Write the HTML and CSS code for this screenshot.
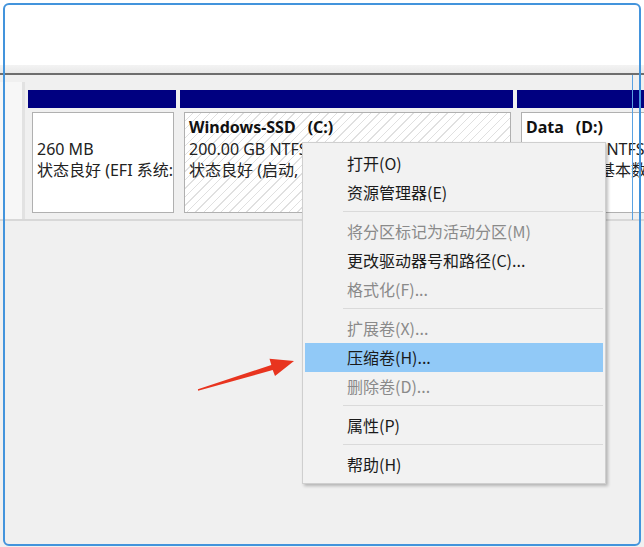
FILE: index.html
```html
<!DOCTYPE html>
<html>
<head>
    <link rel="stylesheet" href="styles.css">
</head>
<body>
    <div class="screen">
        <div class="top-pane"></div>
        <div class="pane-split"></div>
        <div class="pane-rule"></div>

        <div class="disk-row">
            <div class="disk-label"></div>
            <div class="parts">
                <div class="part efi">
                    <div class="part-bar"></div>
                    <div class="part-body">
                        <div>&nbsp;</div>
                        <div>260 MB</div>
                        <div>状态良好 (EFI 系统:</div>
                    </div>
                </div>
                <div class="part sys">
                    <div class="part-bar"></div>
                    <div class="part-body hatched">
                        <div class="name">Windows-SSD<span class="gap"></span>(C:)</div>
                        <div>200.00 GB NTFS</div>
                        <div>状态良好 (启动,</div>
                    </div>
                </div>
                <div class="part data">
                    <div class="part-bar"></div>
                    <div class="part-body">
                        <div class="name">Data<span class="gap"></span>(D:)</div>
                        <div>275.90 GB NTFS</div>
                        <div>状态良好 (基本数</div>
                    </div>
                </div>
            </div>
        </div>

        <!-- context menu over the C: partition -->
        <div class="menu">
            <div class="menu-item">打开(O)</div>
            <div class="menu-item">资源管理器(E)</div>
            <div class="menu-sep"></div>
            <div class="menu-item disabled">将分区标记为活动分区(M)</div>
            <div class="menu-item">更改驱动器号和路径(C)...</div>
            <div class="menu-item disabled">格式化(F)...</div>
            <div class="menu-sep"></div>
            <div class="menu-item disabled">扩展卷(X)...</div>
            <div class="menu-item active">压缩卷(H)...</div>
            <div class="menu-item disabled">删除卷(D)...</div>
            <div class="menu-sep"></div>
            <div class="menu-item">属性(P)</div>
            <div class="menu-sep"></div>
            <div class="menu-item">帮助(H)</div>
        </div>

        <svg class="arrow" width="644" height="547" viewBox="0 0 644 547">
            <polygon fill="#e8341f" points="197.9,389.3 271.3,365 269.5,358.8 294,361 275,376 272.7,370 198.1,390.7" />
        </svg>

        <div class="select-edge"></div>
        <div class="frame"></div>
    </div>
</body>
</html>
```

FILE: styles.css
```css
body {
    margin: 0;
    background: #f0f0f0;
    font-family: "Noto Sans", "Noto Sans CJK SC", sans-serif;
    color: #1a1a1a;
}
.screen {
    position: relative;
    width: 644px;
    height: 547px;
    overflow: hidden;
    background: #f0f0f0;
}
.top-pane {
    height: 65px;
    background: #ffffff;
}
.pane-split {
    height: 8px;
    background: linear-gradient(#f3f3f3, #e9e9e9);
}
.pane-rule {
    height: 2px;
    background: #6e6e6e;
}

.disk-row {
    display: flex;
    margin-top: 7px;
    height: 137px;
    border-bottom: 2px solid #d8d8d8;
}
.disk-label {
    width: 22px;
    flex-shrink: 0;
    background: #f7f7f7;
    border-right: 3px solid #e2e2e2;
}
.parts {
    display: flex;
    gap: 4px;
    padding: 8px 0 0 3px;
    flex: 1;
    min-width: 0;
}
.part {
    flex-shrink: 0;
    overflow: hidden;
}
.efi {
    width: 148px;
}
.sys {
    width: 333px;
}
.data {
    width: 140px;
}
.part-bar {
    height: 18px;
    background: #000080;
}
.part-body {
    height: 95px;
    margin: 4px 2px 0 4px;
    padding: 4px 0 0 4px;
    border: 1px solid #b0b0b0;
    background: #ffffff;
    font-size: 16px;
    line-height: 21.5px;
    white-space: nowrap;
    overflow: hidden;
    color: #222;
}
.part-body .name {
    font-weight: bold;
    color: #111;
}
.part-body .gap {
    display: inline-block;
    width: 12px;
}
.hatched {
    background: repeating-linear-gradient(135deg, #ffffff 0 5px, #e0e0e0 5px 6px);
}

.menu {
    position: absolute;
    left: 302px;
    top: 142px;
    width: 302px;
    padding: 6px 0 4px;
    background: #f2f2f2;
    border: 1px solid #cfcfcf;
    box-shadow: 2px 2px 3px rgba(0, 0, 0, 0.25);
    font-family: "Noto Sans CJK SC", sans-serif;
    font-size: 16px;
}
.menu-item {
    height: 29px;
    line-height: 29px;
    margin: 0 2px;
    padding-left: 42px;
    color: #1a1a1a;
}
.menu-item.disabled {
    color: #8a8a8a;
}
.menu-item.active {
    background: #91c9f7;
}
.menu-sep {
    height: 1px;
    margin: 4px 2px 5px 40px;
    background: #dadada;
}

.arrow {
    position: absolute;
    left: 0;
    top: 0;
}
/* leftover selection outline from the capture */
.select-edge {
    position: absolute;
    left: 632px;
    top: 75px;
    width: 1px;
    height: 145px;
    background: #5aa2e2;
}
.frame {
    position: absolute;
    left: 3px;
    top: 3px;
    width: 634px;
    height: 539px;
    border: 2px solid #4394dc;
    border-radius: 6px;
    pointer-events: none;
}
```
